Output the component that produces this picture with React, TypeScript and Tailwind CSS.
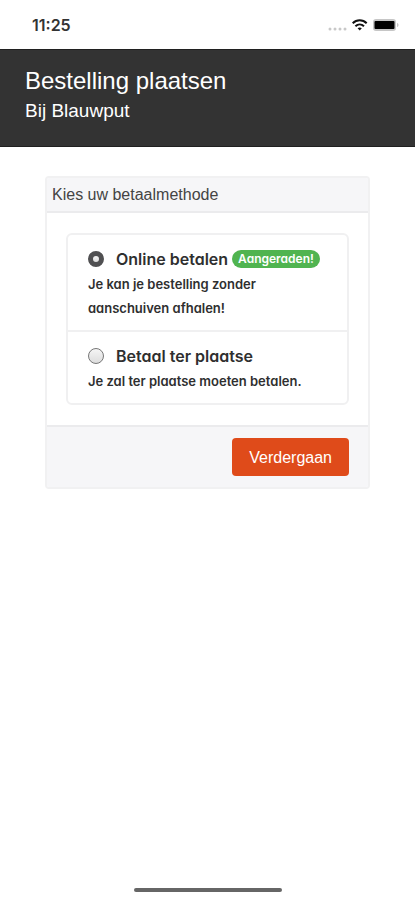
import { useState } from "react";

type Method = {
  id: string;
  title: string;
  description: string;
  badge?: string;
};

const methods: Method[] = [
  {
    id: "online",
    title: "Online betalen",
    description: "Je kan je bestelling zonder aanschuiven afhalen!",
    badge: "Aangeraden!",
  },
  {
    id: "counter",
    title: "Betaal ter plaatse",
    description: "Je zal ter plaatse moeten betalen.",
  },
];

function StatusBar() {
  return (
    <div className="flex h-[49px] items-center justify-between pr-4 pl-8 text-black">
      <span className="font-['Inter',sans-serif] text-base font-semibold text-[#333333]">11:25</span>
      <div className="flex items-center gap-1">
        <svg width="20" height="16" viewBox="0 0 20 16" fill="#c8c8c8" aria-hidden="true">
          <circle cx="2" cy="12" r="1.5" />
          <circle cx="7" cy="12" r="1.5" />
          <circle cx="12" cy="12" r="1.5" />
          <circle cx="17" cy="12" r="1.5" />
        </svg>
        <svg width="16" height="12" viewBox="0 0 16 12" fill="none" stroke="#111111" strokeWidth="2" aria-hidden="true">
          <path d="M.7 4.2C4.7.3 10.7.3 14.7 4.2" />
          <path d="M3.4 7.2c2.5-2.4 6.1-2.4 8.6 0" />
          <path d="M5.6 9.3c1.2-1.1 3-1.1 4.2 0L7.7 11.5z" fill="#111111" stroke="none" />
        </svg>
        <svg width="27" height="14" viewBox="0 0 27 14" aria-hidden="true">
          <rect x="1" y="1" width="23" height="12" rx="3" fill="#c6c6c6" />
          <rect x="2.5" y="3" width="20" height="8" rx="1" fill="#000000" />
          <path d="M25 5v4c2-.6 2-3.4 0-4z" fill="#c6c6c6" />
        </svg>
      </div>
    </div>
  );
}

export default function App() {
  const [selected, setSelected] = useState("online");

  return (
    <div className="flex min-h-screen flex-col bg-white font-['Liberation_Sans',Arial,sans-serif]">
      <StatusBar />
      <header className="border-y border-[#202020] bg-[#333333] px-[25px] pt-[15px] pb-[21px] text-white">
        <h1 className="text-2xl leading-8">Bestelling plaatsen</h1>
        <p className="text-[19px] leading-7">Bij Blauwput</p>
      </header>

      <main className="grow px-[45px] pt-[29px]">
        <form
          className="overflow-hidden rounded border-2 border-[#f1f1f2]"
          onSubmit={(event) => event.preventDefault()}
        >
          <fieldset>
            <legend className="w-full border-b-2 border-[#ebebed] bg-[#f6f6f8] px-[5px] py-1 text-base leading-[25px] text-[#444444]">
              Kies uw betaalmethode
            </legend>
            <div className="px-[19px] py-5 font-['Inter',sans-serif] text-[#2f2f2f] [font-feature-settings:'cv11']">
              <div className="divide-y-2 divide-[#f0f0f1] rounded-md border-2 border-[#f0f0f1]">
                {methods.map((method) => (
                  <div key={method.id} className="px-5 pt-[11px] pb-[10px]">
                    <div className="flex h-[26px] items-center">
                      <input
                        type="radio"
                        name="method"
                        id={method.id}
                        checked={selected === method.id}
                        onChange={() => setSelected(method.id)}
                        aria-describedby={method.id + "-description"}
                        className="size-4 shrink-0 appearance-none rounded-full border border-[#777777] bg-linear-to-b from-[#f5f5f5] to-[#dddddd] checked:border-[5px] checked:border-[#505052] checked:bg-white"
                      />
                      <label htmlFor={method.id} className="ml-3 text-base font-semibold whitespace-nowrap">
                        {method.title}
                      </label>
                      {method.badge && (
                        <span className="ml-1 rounded-full bg-[#50b450] px-1.5 text-xs leading-[18px] font-semibold text-white">
                          {method.badge}
                        </span>
                      )}
                    </div>
                    <p id={method.id + "-description"} className="max-w-[220px] text-[13px] leading-6 font-semibold">
                      {method.description}
                    </p>
                  </div>
                ))}
              </div>
            </div>
          </fieldset>
          <div className="flex justify-end border-t-2 border-[#ebebed] bg-[#f6f6f8] px-[19px] py-[11px]">
            <button type="submit" className="rounded bg-[#df4b1a] px-[17px] pt-2 pb-1.5 text-base leading-6 text-white">
              Verdergaan
            </button>
          </div>
        </form>
      </main>

      <div className="flex justify-center pb-2">
        <div className="h-1 w-[148px] rounded-full bg-[#666666]" />
      </div>
    </div>
  );
}
